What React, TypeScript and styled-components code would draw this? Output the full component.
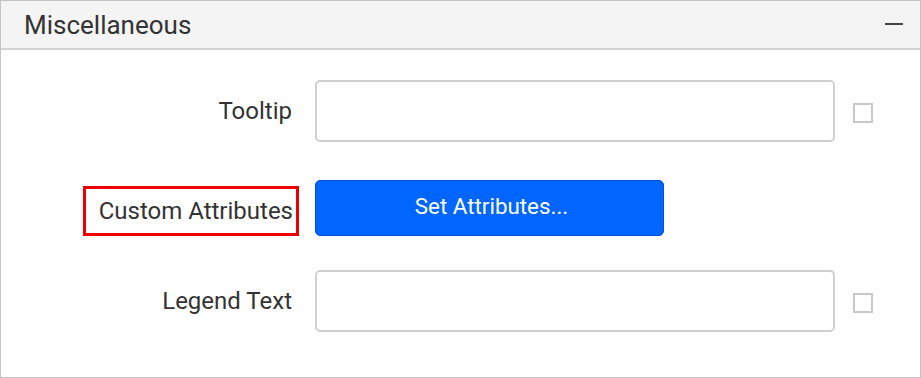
import React from "react";
import styled, { createGlobalStyle } from "styled-components";

const Global = createGlobalStyle`
  html, body { margin: 0; padding: 0; background: #fff; }
  body { font-family: Roboto, "Liberation Sans", Arial, sans-serif; }
  * { box-sizing: border-box; }
`;

const Panel = styled.div`
  width: 921px;
  height: 378px;
  border: 1px solid #c4c4c4;
  background: #fff;
  display: flex;
  flex-direction: column;
`;

const Header = styled.div`
  height: 49px;
  background: #f4f4f4;
  border-bottom: 2px solid #d2d2d2;
  display: flex;
  align-items: center;
  justify-content: space-between;
  padding: 0 17px 0 23px;
`;

const Title = styled.span`
  font-size: 26px;
  line-height: 30px;
  color: #333;
  font-weight: 400;
`;

const Minus = styled.span`
  width: 18px;
  height: 2px;
  background: #444;
  margin-top: -2px;
`;

const Body = styled.div`
  display: grid;
  grid-template-columns: 291px 520px 20px;
  column-gap: 23px;
  padding-top: 30px;
  align-items: center;
`;

const Label = styled.div`
  display: flex;
  justify-content: flex-end;
  font-size: 24px;
  line-height: 28px;
  color: #333;
`;

const Highlight = styled.span`
  border: 3px solid #ee0000;
  padding: 8px 3px 8px 13px;
  margin-right: -7px;
  margin-top: 6px;
  line-height: 28px;
`;

const Input = styled.div`
  height: 62px;
  border: 2px solid #d0d0d0;
  border-radius: 5px;
  background: #fff;
`;

const CheckBox = styled.div`
  width: 20px;
  height: 20px;
  border: 2px solid #c8c8c8;
  margin-left: -5px;
  margin-top: 3px;
`;

const Button = styled.button`
  width: 349px;
  height: 56px;
  background: #0066ff;
  border: 1px solid #0052d6;
  border-radius: 5px;
  color: #fff;
  font-family: Roboto, "Liberation Sans", Arial, sans-serif;
  font-size: 22.4px;
  padding: 0 0 4px 4px;
`;

const Spacer = styled.div<{ $h: number }>`
  grid-column: 1 / -1;
  height: ${(p) => p.$h}px;
`;

export default function App() {
  return (
    <>
      <Global />
      <Panel>
        <Header>
          <Title>Miscellaneous</Title>
          <Minus />
        </Header>
        <Body>
          <Label>Tooltip</Label>
          <Input />
          <CheckBox />
          <Spacer $h={38} />
          <Label>
            <Highlight>Custom Attributes</Highlight>
          </Label>
          <div>
            <Button>Set Attributes...</Button>
          </div>
          <div />
          <Spacer $h={34} />
          <Label>Legend Text</Label>
          <Input />
          <CheckBox />
        </Body>
      </Panel>
    </>
  );
}
